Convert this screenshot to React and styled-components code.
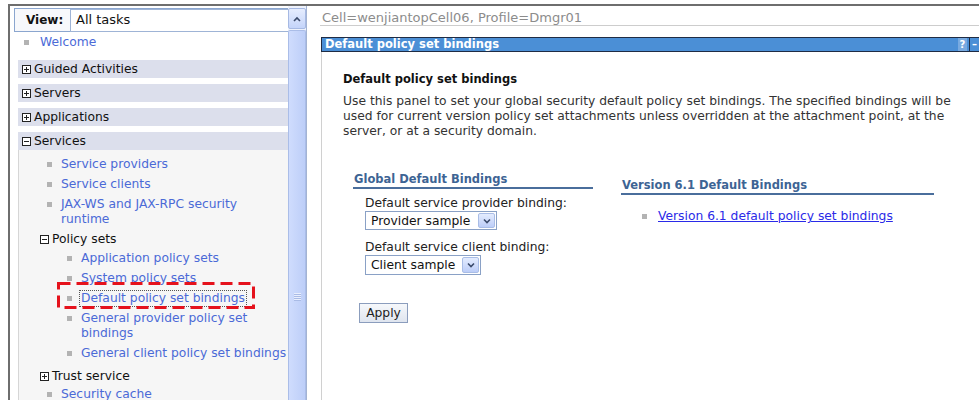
import React from "react";
import styled, { createGlobalStyle } from "styled-components";

const GlobalStyle = createGlobalStyle`
  html, body {
    margin: 0;
    padding: 0;
    background: #fff;
  }
  body {
    font-family: "DejaVu Sans", Verdana, sans-serif;
    font-size: 12.3px;
    color: #222;
  }
`;

const Page = styled.div`
  width: 979px;
  height: 400px;
  padding: 4px 0 0 8px;
  box-sizing: border-box;
  overflow: hidden;
`;

const Frame = styled.div`
  display: flex;
  height: 396px;
  border-top: 2px solid #6e6e6e;
  border-left: 2px solid #6e6e6e;
  overflow: hidden;
`;

/* ---------- navigation tree ---------- */

const NavPane = styled.div`
  display: flex;
  width: 297px;
  flex-shrink: 0;
`;

const NavBody = styled.div`
  position: relative;
  flex: 1;
  display: flex;
  flex-direction: column;
  overflow: hidden;
`;

const ViewBar = styled.div`
  display: flex;
  align-items: center;
  height: 24px;
  flex-shrink: 0;
  margin: 2px 0 0 4px;
  border: 1px solid #8ba6cf;
  border-right: none;
  box-sizing: border-box;
  background: #f7f8fb;
`;

const ViewLabel = styled.span`
  width: 55px;
  padding-left: 11px;
  box-sizing: border-box;
  font-weight: bold;
  font-size: 12px;
  color: #111;
`;

const ViewSelect = styled.div`
  flex: 1;
  height: 21px;
  line-height: 20px;
  padding-left: 5px;
  border: 1px solid #9fb4d6;
  border-right: none;
  background: #fff;
  font-size: 13px;
  color: #111;
`;

const NavItem = styled.div`
  display: flex;
  align-items: flex-start;
  flex-shrink: 0;
  padding: ${(p) => p.$top || 2}px 0 3px ${(p) => p.$indent}px;
  line-height: 15px;
  white-space: nowrap;
`;

const Bullet = styled.span`
  flex-shrink: 0;
  width: 5px;
  height: 5px;
  margin: 5px ${(p) => p.$gap || 9}px 0 0;
  background: #b3b3b3;
`;

const NavLink = styled.a`
  color: #4b6ad7;
  text-decoration: none;
  margin-left: ${(p) => (p.$focused ? -1 : 0)}px;
  padding: ${(p) => (p.$focused ? "0 1px" : 0)};
  outline: ${(p) => (p.$focused ? "1px dotted #555" : "none")};
`;

const GroupLabel = styled.div`
  display: flex;
  align-items: center;
  gap: 3px;
  margin-top: ${(p) => p.$top || 0}px;
  padding: 2px 0 ${(p) => p.$bottom ?? 3}px ${(p) => p.$indent}px;
  line-height: 15px;
  color: #111;
`;

const SectionHeader = styled.div`
  display: flex;
  align-items: center;
  flex-shrink: 0;
  gap: 3px;
  height: 18px;
  margin: ${(p) => p.$top || 6}px 0 0 8px;
  padding-left: 4px;
  background: #dcdfec;
  color: #111;
  white-space: nowrap;
`;

const SectionBody = styled.div`
  flex: 1;
  margin-left: 8px;
  padding-top: 5px;
  background: #f6f6f6;
  border-left: 1px solid #d6d6d6;
`;

const ToggleSvg = styled.svg`
  flex-shrink: 0;
  display: block;
`;

const Toggle = ({ open }) => (
  <ToggleSvg viewBox="0 0 9 9" width="9" height="9">
    <rect x="0.5" y="0.5" width="8" height="8" fill="#fff" stroke="#222" />
    <line x1="2" y1="4.5" x2="7" y2="4.5" stroke="#222" />
    {!open && <line x1="4.5" y1="2" x2="4.5" y2="7" stroke="#222" />}
  </ToggleSvg>
);

const Callout = styled.svg`
  position: absolute;
  left: 47px;
  top: 276px;
`;

const Scrollbar = styled.div`
  display: flex;
  flex-direction: column;
  width: 18px;
  padding-top: 2px;
  border-right: 1px solid #a3b3d3;
  background: #eef2fc;
`;

const ScrollButton = styled.div`
  display: flex;
  align-items: center;
  justify-content: center;
  height: 19px;
  border: 1px solid #a6b9e3;
  border-radius: 2px;
  background: linear-gradient(#e6edfe, #c4d4fa);
`;

const ScrollThumb = styled.div`
  flex: 1;
  display: flex;
  flex-direction: column;
  align-items: center;
  margin-top: 1px;
  padding-top: 262px;
  border: 1px solid #aabde8;
  border-bottom: none;
  border-radius: 2px 2px 0 0;
  background: linear-gradient(to right, #cfdcfd, #bdcef8);
`;

const Grip = styled.div`
  width: 7px;
  height: 8px;
  background: repeating-linear-gradient(#e8eefd 0 1px, #a9bbe6 1px 2px);
`;

/* ---------- content panel ---------- */

const Gutter = styled.div`
  width: 13px;
  flex-shrink: 0;
`;

const Main = styled.div`
  flex: 1;
  min-width: 0;
  display: flex;
  flex-direction: column;
`;

const CellBar = styled.div`
  padding: 4px 0 0 2px;
  line-height: 15px;
  font-size: 13px;
  color: #8c8c8c;
  border-bottom: 1px solid #cdcdcd;
`;

const TitleBar = styled.div`
  display: flex;
  align-items: stretch;
  height: 15px;
  margin: 11px -12px 0 1px;
  border: 1px solid #1f2c44;
  background: #4b8fd6;
  box-sizing: border-box;
  color: #fff;
`;

const TitleText = styled.span`
  flex: 1;
  padding-left: 3px;
  line-height: 13px;
  font-size: 11.5px;
  font-weight: bold;
`;

const TitleButton = styled.span`
  width: ${(p) => p.$w}px;
  margin-right: ${(p) => p.$mr || 0}px;
  border-left: ${(p) => (p.$sep ? "1px solid #1f2c44" : "none")};
  padding-left: ${(p) => (p.$sep ? 2 : 0)}px;
  background: ${(p) => p.$bg};
  line-height: 13px;
  font-size: 10px;
  font-weight: bold;
  text-align: ${(p) => (p.$sep ? "left" : "center")};
`;

const PanelBody = styled.div`
  flex: 1;
  margin-left: 1px;
  padding: 20px 0 0 21px;
  border-left: 1px solid #d0d0d0;
`;

const PanelHeading = styled.div`
  line-height: 15px;
  font-size: 11.5px;
  font-weight: bold;
  color: #111;
`;

const Description = styled.p`
  width: 628px;
  margin: 7px 0 0;
  line-height: 15px;
  font-size: 12.3px;
  color: #333;
`;

const Columns = styled.div`
  display: flex;
  gap: 28px;
  margin: 33px 0 0 10px;
`;

const Column = styled.div`
  width: ${(p) => p.$width}px;
  margin-top: ${(p) => p.$offset || 0}px;
`;

const GroupHeading = styled.div`
  padding-left: 1px;
  line-height: 15px;
  font-size: 11.5px;
  font-weight: bold;
  color: #3d6494;
  border-bottom: 2px solid #4a6e9c;
`;

const Field = styled.div`
  margin-top: ${(p) => p.$top}px;
  padding-left: 12px;
`;

const FieldLabel = styled.div`
  line-height: 15px;
  color: #222;
`;

const SelectBox = styled.div`
  display: flex;
  align-items: center;
  width: ${(p) => p.$width}px;
  height: ${(p) => p.$height}px;
  border: 1px solid #8aa1c6;
  box-sizing: border-box;
  background: #fff;
`;

const SelectValue = styled.span`
  flex: 1;
  padding-left: 5px;
  font-size: 12.3px;
  color: #111;
`;

const SelectArrow = styled.span`
  display: flex;
  align-items: center;
  justify-content: center;
  width: 17px;
  height: calc(100% - 2px);
  margin-right: 1px;
  border: 1px solid #a9bde6;
  border-radius: 2px;
  box-sizing: border-box;
  background: linear-gradient(#e4ecfe, #bccdf8);
`;

const Chevron = ({ up }) => (
  <svg width="8" height="6" viewBox="0 0 8 6">
    <path
      d={up ? "M1 5 L4 2 L7 5" : "M1 1.5 L4 4.5 L7 1.5"}
      fill="none"
      stroke="#3b4a6b"
      strokeWidth="1.6"
    />
  </svg>
);

const Dropdown = ({ width, height, children }) => (
  <SelectBox $width={width} $height={height}>
    <SelectValue>{children}</SelectValue>
    <SelectArrow>
      <Chevron />
    </SelectArrow>
  </SelectBox>
);

const ApplyButton = styled.button`
  display: block;
  width: 49px;
  height: 20px;
  margin: 28px 0 0 6px;
  padding: 0;
  border: 1px solid #8b9dbd;
  background: linear-gradient(#f6f8fb, #dfe5ef);
  font-family: inherit;
  font-size: 12.3px;
  color: #222;
`;

const LinkRow = styled.div`
  display: flex;
  align-items: flex-start;
  margin-top: 14px;
  padding-left: 21px;
  line-height: 15px;
`;

const BlueLink = styled.a`
  color: #2a2ae8;
  text-decoration: underline;
`;

export default function App() {
  return (
    <>
      <GlobalStyle />
      <Page>
        <Frame>
          <NavPane>
            <NavBody>
              <ViewBar>
                <ViewLabel>View:</ViewLabel>
                <ViewSelect>All tasks</ViewSelect>
              </ViewBar>
              <NavItem $indent={14} $top={3}>
                <Bullet $gap={11} />
                <NavLink>Welcome</NavLink>
              </NavItem>
              <SectionHeader $top={7}>
                <Toggle />
                Guided Activities
              </SectionHeader>
              <SectionHeader>
                <Toggle />
                Servers
              </SectionHeader>
              <SectionHeader>
                <Toggle />
                Applications
              </SectionHeader>
              <SectionHeader>
                <Toggle open />
                Services
              </SectionHeader>
              <SectionBody>
                <NavItem $indent={28}>
                  <Bullet />
                  <NavLink>Service providers</NavLink>
                </NavItem>
                <NavItem $indent={28}>
                  <Bullet />
                  <NavLink>Service clients</NavLink>
                </NavItem>
                <NavItem $indent={28}>
                  <Bullet />
                  <NavLink>
                    JAX-WS and JAX-RPC security
                    <br />
                    runtime
                  </NavLink>
                </NavItem>
                <GroupLabel $indent={21} $bottom={2}>
                  <Toggle open />
                  Policy sets
                </GroupLabel>
                <NavItem $indent={48}>
                  <Bullet />
                  <NavLink>Application policy sets</NavLink>
                </NavItem>
                <NavItem $indent={48}>
                  <Bullet />
                  <NavLink>System policy sets</NavLink>
                </NavItem>
                <NavItem $indent={48}>
                  <Bullet />
                  <NavLink $focused>Default policy set bindings</NavLink>
                </NavItem>
                <NavItem $indent={48}>
                  <Bullet />
                  <NavLink>
                    General provider policy set
                    <br />
                    bindings
                  </NavLink>
                </NavItem>
                <NavItem $indent={48}>
                  <Bullet />
                  <NavLink>General client policy set bindings</NavLink>
                </NavItem>
                <GroupLabel $indent={21} $top={3} $bottom={1}>
                  <Toggle />
                  Trust service
                </GroupLabel>
                <NavItem $indent={28}>
                  <Bullet />
                  <NavLink>Security cache</NavLink>
                </NavItem>
              </SectionBody>
              <Callout width="198" height="27" viewBox="0 0 198 27">
                <rect
                  x="1.5"
                  y="1.5"
                  width="195"
                  height="24"
                  fill="none"
                  stroke="#e5121c"
                  strokeWidth="3"
                  strokeDasharray="12 6"
                />
              </Callout>
            </NavBody>
            <Scrollbar>
              <ScrollButton>
                <Chevron up />
              </ScrollButton>
              <ScrollThumb>
                <Grip />
              </ScrollThumb>
            </Scrollbar>
          </NavPane>
          <Gutter />
          <Main>
            <CellBar>Cell=wenjiantopCell06, Profile=Dmgr01</CellBar>
            <TitleBar>
              <TitleText>Default policy set bindings</TitleText>
              <TitleButton $w={9} $mr={2} $bg="#79aae0">
                ?
              </TitleButton>
              <TitleButton $w={18} $sep $bg="#4b8fd6">
                –
              </TitleButton>
            </TitleBar>
            <PanelBody>
              <PanelHeading>Default policy set bindings</PanelHeading>
              <Description>
                Use this panel to set your global security default policy set
                bindings. The specified bindings will be used for current
                version policy set attachments unless overridden at the
                attachment point, at the server, or at a security domain.
              </Description>
              <Columns>
                <Column $width={240}>
                  <GroupHeading>Global Default Bindings</GroupHeading>
                  <Field $top={7}>
                    <FieldLabel>Default service provider binding:</FieldLabel>
                    <Dropdown width={132} height={19}>
                      Provider sample
                    </Dropdown>
                  </Field>
                  <Field $top={10}>
                    <FieldLabel>Default service client binding:</FieldLabel>
                    <Dropdown width={116} height={20}>
                      Client sample
                    </Dropdown>
                  </Field>
                  <ApplyButton>Apply</ApplyButton>
                </Column>
                <Column $width={313} $offset={6}>
                  <GroupHeading>Version 6.1 Default Bindings</GroupHeading>
                  <LinkRow>
                    <Bullet $gap={11} />
                    <BlueLink>Version 6.1 default policy set bindings</BlueLink>
                  </LinkRow>
                </Column>
              </Columns>
            </PanelBody>
          </Main>
        </Frame>
      </Page>
    </>
  );
}
